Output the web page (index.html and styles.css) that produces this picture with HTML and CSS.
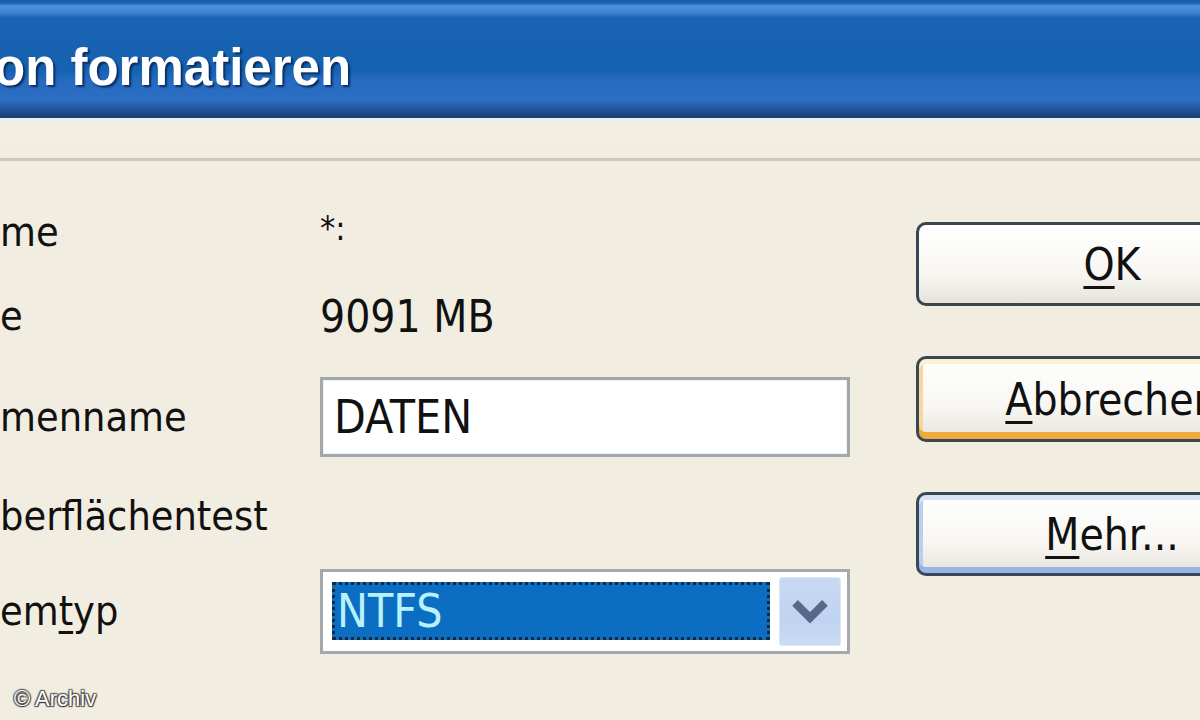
FILE: index.html
```html
<!DOCTYPE html>
<html lang="de">
<head>
<meta charset="utf-8">
<title>Partition formatieren</title>
<link rel="stylesheet" href="styles.css">
</head>
<body>
<div class="window">
  <header class="titlebar">
    <span class="title">on formatieren</span>
  </header>
  <div class="band"></div>
  <div class="content">
    <div class="form">
      <div class="row r1"><span class="label">me</span><span class="value drive">*:</span></div>
      <div class="row r2"><span class="label">e</span><span class="value">9091 MB</span></div>
      <div class="row r3"><span class="label">menname</span><div class="textbox">DATEN</div></div>
      <div class="row r4"><span class="label">berflächentest</span></div>
      <div class="row r5"><span class="label">em<u>t</u>yp</span>
        <div class="combo">
          <div class="selection"><span>NTFS</span></div>
          <div class="drop">
            <svg viewBox="0 0 40 40" width="46" height="46"><path d="M7 13 L20 26 L33 13" fill="none" stroke="#56698a" stroke-width="7" stroke-linejoin="miter"/></svg>
          </div>
        </div>
      </div>
      <div class="footer">© Archiv</div>
    </div>
    <div class="buttons">
      <button class="btn"><u>O</u>K</button>
      <button class="btn default"><u>A</u>bbrechen</button>
      <button class="btn focus"><u>M</u>ehr...</button>
    </div>
  </div>
</div>
</body>
</html>
```

FILE: styles.css
```css
html, body {
  margin: 0;
  padding: 0;
}
body {
  width: 1200px;
  height: 720px;
  overflow: hidden;
  background: #f2ede1;
  font-family: "DejaVu Sans Condensed", "DejaVu Sans", sans-serif;
  color: #111;
}
.window {
  width: 1200px;
  height: 720px;
  overflow: hidden;
}
.titlebar {
  height: 118px;
  display: flex;
  align-items: center;
  background: linear-gradient(to bottom,
    #1a5aa4 0px, #1e64b4 3px, #4a92dc 6px, #3f86d4 12px, #1b63b2 18px,
    #1462b0 70px, #256ac0 80px, #2d6ec4 100px, #22599e 108px, #1a4680 114px, #1a3f74 118px);
}
.title {
  font-family: "Liberation Sans", Arial, sans-serif;
  font-weight: bold;
  font-size: 51px;
  color: #fff;
  letter-spacing: 0;
  text-shadow: 2px 2px 2px #0b2c5e;
  margin-top: 16px;
  margin-left: -6px;
}
.band {
  height: 40px;
  background: linear-gradient(to bottom, #e6eef6 0px, #f4efe4 5px, #f2ece0 38px);
  border-bottom: 3px solid #cec8b6;
}
.content {
  display: flex;
}
.form {
  width: 916px;
  padding-top: 29px;
  flex: none;
}
.row {
  display: flex;
  align-items: center;
  font-size: 44px;
}
.r1 { height: 84px; }
.r2 { height: 84px; }
.r3 { height: 118px; }
.r4 { height: 80px; }
.r5 { height: 110px; }
.label {
  width: 320px;
  flex: none;
  font-size: 41px;
}
.value {
  padding-left: 0;
}
.drive {
  font-size: 34px;
  align-self: flex-start;
  padding-top: 18px;
}
u {
  text-decoration-thickness: 3px;
  text-underline-offset: 6px;
}
.textbox {
  border: 3px solid #a2a7ab;
  box-shadow: inset 0 0 0 1px #eef2f4;
  background: #fff;
  display: flex;
  align-items: center;
  padding-left: 11px;
  box-sizing: border-box;
  width: 530px;
  height: 80px;
  font-size: 46px;
}
.combo {
  width: 530px;
  height: 85px;
  box-sizing: border-box;
  border: 3px solid #a4a9ad;
  background: #fff;
  display: flex;
  align-items: center;
  padding: 0 6px 0 9px;
  gap: 9px;
}
.selection {
  width: 440px;
  height: 58px;
  box-sizing: border-box;
  background: #0b6ec3;
  border: 3px dotted #152a3c;
  display: flex;
  align-items: center;
  padding-left: 2px;
  color: #b9f1ff;
  font-size: 46px;
}
.drop {
  width: 60px;
  height: 67px;
  background: linear-gradient(to bottom, #c9d9f2, #bfd3f0 60%, #cadcf3);
  border: 1px solid #dbe6f6;
  border-radius: 3px;
  display: flex;
  align-items: center;
  justify-content: center;
}
.footer {
  margin-top: 20px;
  padding-left: 14px;
  font-family: "Liberation Sans", Arial, sans-serif;
  font-size: 22px;
  color: #fff;
  text-shadow: 1px 1px 1px #333, -1px -1px 1px #555, 1px -1px 1px #555, -1px 1px 1px #555;
}
.buttons {
  padding-top: 61px;
  display: flex;
  flex-direction: column;
  gap: 50px;
  flex: none;
}
.btn {
  width: 392px;
  height: 84px;
  box-sizing: border-box;
  border: 3px solid #3b4654;
  border-radius: 10px;
  background: linear-gradient(to bottom, #ffffff 0%, #f8f7f3 60%, #e6e3da 100%);
  font-family: "DejaVu Sans Condensed", "DejaVu Sans", sans-serif;
  font-size: 44px;
  color: #111;
  padding: 0;
  text-align: center;
}
.btn.default {
  height: 86px;
  box-shadow: inset 0 5px 0 #fdf1cf, inset 0 -7px 0 #eeaa3a, inset 4px 0 0 #f8d89a;
}
.btn.focus {
  box-shadow: inset 0 5px 0 #d6e4f8, inset 0 -6px 0 #98b4e4, inset 4px 0 0 #b8cff0;
}
```
